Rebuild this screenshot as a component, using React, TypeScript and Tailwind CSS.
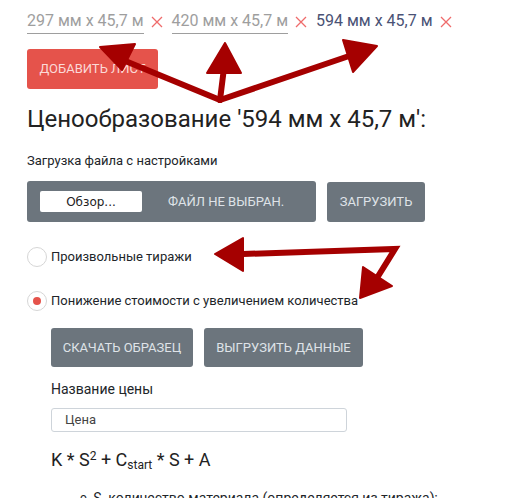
import React from "react";

const tabs = [
  { label: "297 мм х 45,7 м", active: false },
  { label: "420 мм х 45,7 м", active: false },
  { label: "594 мм х 45,7 м", active: true },
];

function Cross() {
  return (
    <svg width="12" height="12" viewBox="0 0 12 12" className="shrink-0">
      <path d="M1 1L11 11M11 1L1 11" stroke="#ef6b6b" strokeWidth="1.3" />
    </svg>
  );
}

function Radio({ checked }: { checked?: boolean }) {
  return (
    <span className="flex h-[20px] w-[20px] shrink-0 items-center justify-center rounded-full border border-[#d6d6d6] bg-white">
      {checked && <span className="h-[8px] w-[8px] rounded-full bg-[#e5534b]" />}
    </span>
  );
}

function Arrows() {
  const c = "#a50000";
  return (
    <svg className="pointer-events-none absolute left-0 top-0" width="514" height="498">
      <g stroke={c} strokeWidth="6" strokeLinecap="round" fill="none">
        <path d="M220 100L118 58" />
        <path d="M220 100L224 68" />
        <path d="M220 100L352 55" />
        <path d="M243 254L395 249L377 278" />
      </g>
      <g fill={c} stroke={c} strokeWidth="2" strokeLinejoin="round">
        <polygon points="100,47 135,44 122,70" />
        <polygon points="225,43 207,73 241,73" />
        <polygon points="377,46 343,40 353,72" />
        <polygon points="215,254 243,238 243,271" />
        <polygon points="360,298 363,267 392,286" />
      </g>
    </svg>
  );
}

export default function App() {
  return (
    <div className="relative h-[498px] w-[514px] overflow-hidden bg-white font-['Roboto',sans-serif] text-[#212529]">
      <div className="pl-[27px] pt-[10px]">
        <div className="flex items-center">
          {tabs.map((t, i) => (
            <div key={i} className="mr-[9px] flex items-center gap-[7px]">
              <span
                className={
                  t.active
                    ? "border-b border-transparent pb-[1px] text-[16px] leading-[22px] text-[#4a5275]"
                    : "border-b border-[#9e9e9e] pb-[1px] text-[16px] leading-[22px] text-[#9e9e9e]"
                }
              >
                {t.label}
              </span>
              <Cross />
            </div>
          ))}
        </div>

        <button className="mt-[15px] h-[40px] w-[131px] rounded-[3px] bg-[#e5534b] text-[13px] uppercase text-[#fbd9d7]">
          Добавить лист
        </button>

        <h1 className="mt-[16px] text-[24px] leading-[29px] text-[#222]">Ценообразование '594 мм х 45,7 м':</h1>

        <div className="mt-[17px] text-[13px] leading-[20px]">Загрузка файла с настройками</div>

        <div className="mt-[10px] flex gap-[11px]">
          <div className="flex h-[41px] w-[289px] items-center rounded-[3px] bg-[#6c757d] pl-[13px]">
            <span className="flex h-[21px] w-[102px] items-center justify-center rounded-[2px] bg-white font-['DejaVu_Sans',sans-serif] text-[12px] text-[#222]">
              Обзор...
            </span>
            <span className="ml-[26px] text-[13px] uppercase text-[#dfe3e8]">Файл не выбран.</span>
          </div>
          <button className="mt-[1px] h-[40px] w-[98px] rounded-[3px] bg-[#6c757d] text-[13px] uppercase text-[#dfe3e8]">
            Загрузить
          </button>
        </div>

        <label className="mt-[25px] flex items-center gap-[4px] text-[13px] leading-[20px]">
          <Radio />
          Произвольные тиражи
        </label>
        <label className="mt-[24px] flex items-center gap-[4px] text-[13px] leading-[20px]">
          <Radio checked />
          Понижение стоимости с увеличением количества
        </label>

        <div className="ml-[24px]">
          <div className="mt-[17px] flex gap-[11px]">
            <button className="h-[39px] w-[142px] rounded-[3px] bg-[#6c757d] text-[13px] uppercase text-[#dfe3e8]">
              Скачать образец
            </button>
            <button className="h-[39px] w-[159px] rounded-[3px] bg-[#6c757d] text-[13px] uppercase text-[#dfe3e8]">
              Выгрузить данные
            </button>
          </div>

          <div className="mt-[12px] text-[14px] leading-[20px]">Название цены</div>
          <div className="mt-[9px] flex h-[24px] w-[296px] items-center rounded-[3px] border border-[#ced4da] pl-[13px] text-[13px] text-[#444]">
            Цена
          </div>

          <div className="mt-[16px] text-[18px] leading-[24px] text-[#222]">
            K * S<sup className="text-[12px]">2</sup> + C<sub className="text-[12px]">start</sub> * S + A
          </div>

          <ul className="mt-[16px] pl-[29px] text-[14px] leading-[20px]">
            <li className="flex items-center gap-[6px]">
              <span className="text-[12px]">o</span>
              <span>
                <i>S</i>- количество материала (определяется из тиража);
              </span>
            </li>
          </ul>
        </div>
      </div>
      <Arrows />
    </div>
  );
}
